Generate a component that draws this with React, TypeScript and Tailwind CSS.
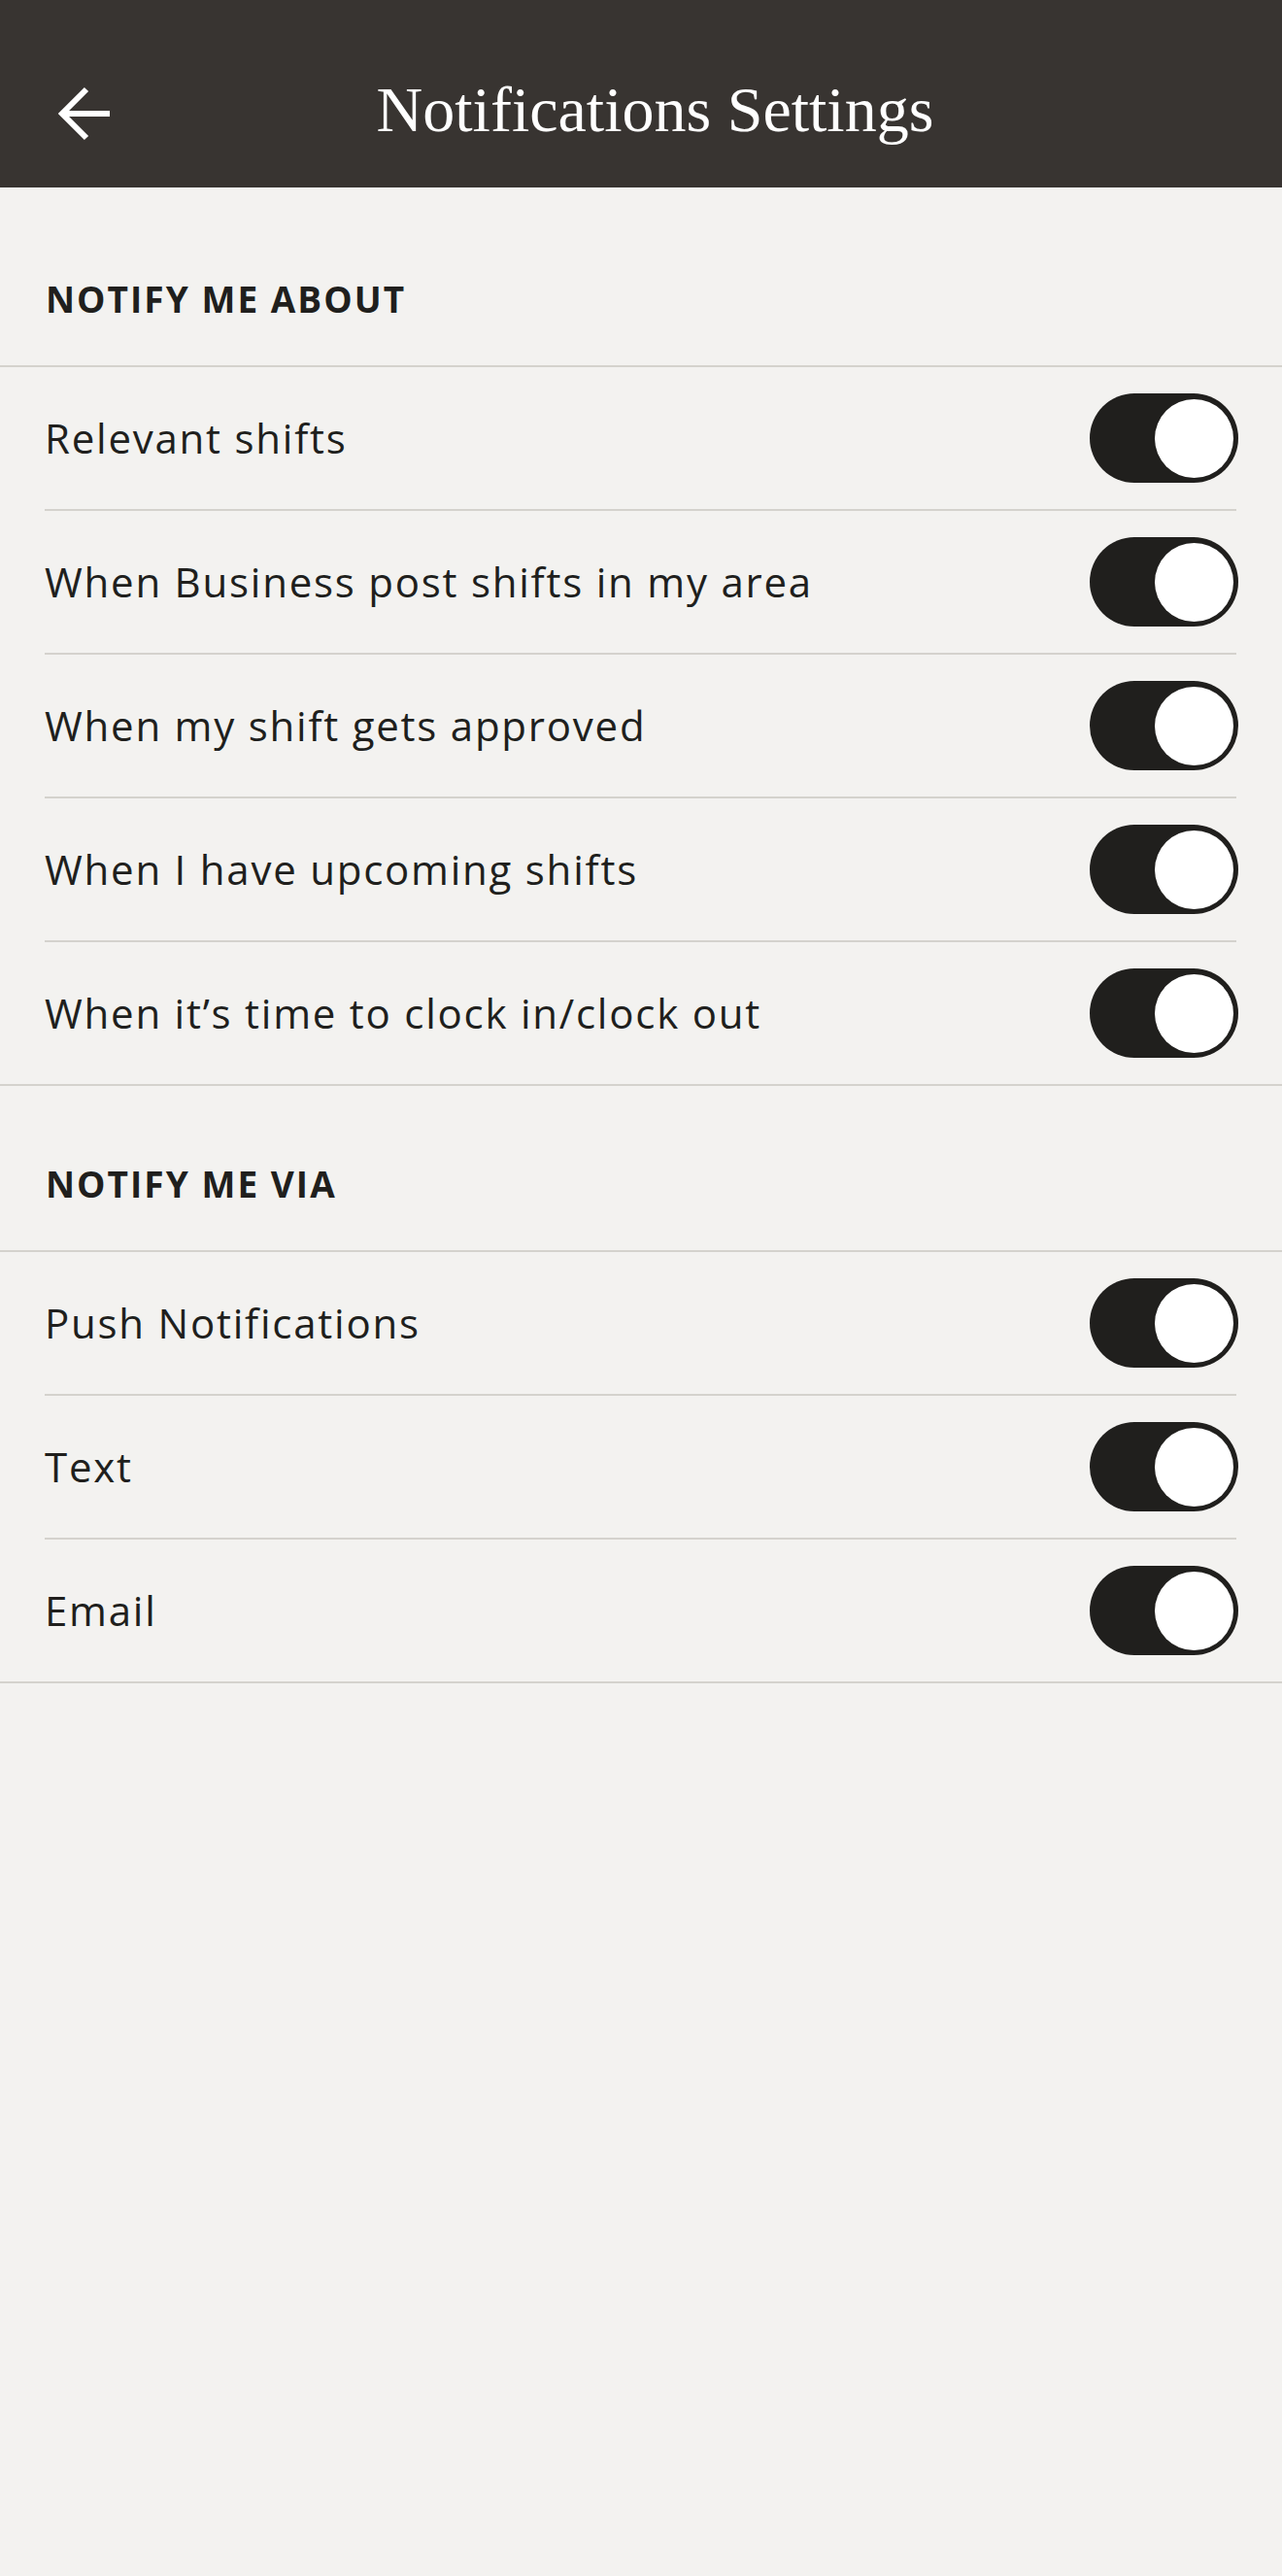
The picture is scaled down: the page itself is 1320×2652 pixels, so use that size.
import { useState } from 'react'

interface ToggleRowProps {
  label: string
  last?: boolean
}

function Toggle({ on, onChange }: { on: boolean; onChange: () => void }) {
  return (
    <button
      onClick={onChange}
      className={`w-[153px] h-[92px] rounded-full flex items-center px-[5px] flex-shrink-0 ${
        on ? 'bg-[#201f1d] justify-end' : 'bg-[#c9c6c0] justify-start'
      }`}
      aria-pressed={on}
    >
      <span className="block w-[81px] h-[81px] rounded-full bg-white" />
    </button>
  )
}

function ToggleRow({ label, last }: ToggleRowProps) {
  const [on, setOn] = useState(true)
  return (
    <>
      <div className="h-[146px] flex items-center justify-between pl-[46px] pr-[45px]">
        <span className="text-[42px] leading-[50px] tracking-[0.042em] text-[#201f1d]">{label}</span>
        <Toggle on={on} onChange={() => setOn(v => !v)} />
      </div>
      {/* inner rows get an inset divider, the last one spans the full width */}
      {last ? (
        <div className="h-[2px] bg-[#d4d2cd]" />
      ) : (
        <div className="h-[2px] bg-[#d4d2cd] ml-[46px] mr-[47px]" />
      )}
    </>
  )
}

function SectionTitle({ title, first }: { title: string; first?: boolean }) {
  return (
    <>
      <div className={`${first ? 'h-[183px]' : 'h-[169px]'} flex items-end pl-[47px] pb-[54px]`}>
        <h2 className="text-[37px] leading-[28px] font-bold tracking-[0.055em] text-[#201f1d]">{title}</h2>
      </div>
      <div className="h-[2px] bg-[#d4d2cd]" />
    </>
  )
}

const aboutItems = [
  'Relevant shifts',
  'When Business post shifts in my area',
  'When my shift gets approved',
  'When I have upcoming shifts',
  'When it\u2019s time to clock in/clock out',
]

const viaItems = ['Push Notifications', 'Text', 'Email']

export default function App() {
  return (
    <div className="min-h-screen w-full bg-[#f3f2f0] font-['Open_Sans',sans-serif]">
      <header className="h-[193px] bg-[#383431] pt-[40px] flex items-center">
        <button className="ml-[58px] w-[58px] h-[58px] flex items-center justify-center" aria-label="Back">
          <svg width="58" height="58" viewBox="0 0 58 58" fill="none">
            <path d="M31 4 L6 29 L31 54" stroke="white" strokeWidth="6" />
            <path d="M8 29 H55" stroke="white" strokeWidth="6" />
          </svg>
        </button>
        <h1 className="flex-1 text-center pr-[87px] pb-[8px] text-[66px] leading-[80px] text-white font-['Liberation_Serif',serif]">
          Notifications Settings
        </h1>
      </header>

      <SectionTitle title="NOTIFY ME ABOUT" first />
      {aboutItems.map((item, i) => (
        <ToggleRow key={item} label={item} last={i === aboutItems.length - 1} />
      ))}

      <SectionTitle title="NOTIFY ME VIA" />
      {viaItems.map((item, i) => (
        <ToggleRow key={item} label={item} last={i === viaItems.length - 1} />
      ))}
    </div>
  )
}
